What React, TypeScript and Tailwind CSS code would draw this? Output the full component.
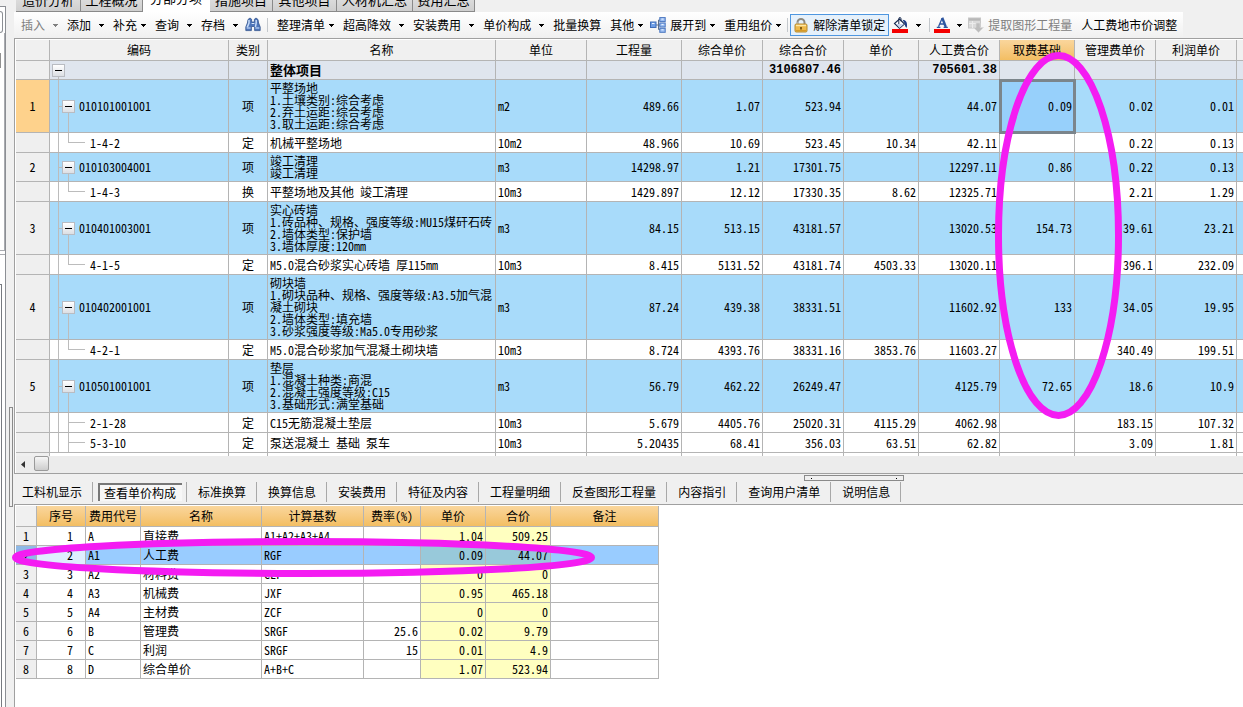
import type { ReactNode } from 'react';

type Row = {
  no?: string;
  code: string;
  last?: boolean;
  kind: string;
  name: string[];
  unit: string;
  values: string[];
  height: string;
};

const H20 = 'h-[19px]';
const H29 = 'h-[28px]';
const H53 = 'h-[52px]';
const H65 = 'h-[64px]';

const rows: Row[] = [
  { no: '1', code: '010101001001', kind: '项', name: ['平整场地', '1.土壤类别:综合考虑', '2.弃土运距:综合考虑', '3.取土运距:综合考虑'], unit: 'm2', values: ['489.66', '1.07', '523.94', '', '44.07', '0.09', '0.02', '0.01'], height: H53 },
  { code: '1-4-2', last: true, kind: '定', name: ['机械平整场地'], unit: '10m2', values: ['48.966', '10.69', '523.45', '10.34', '42.11', '', '0.22', '0.13'], height: H20 },
  { no: '2', code: '010103004001', kind: '项', name: ['竣工清理', '竣工清理'], unit: 'm3', values: ['14298.97', '1.21', '17301.75', '', '12297.11', '0.86', '0.22', '0.13'], height: H29 },
  { code: '1-4-3', last: true, kind: '换', name: ['平整场地及其他 竣工清理'], unit: '10m3', values: ['1429.897', '12.12', '17330.35', '8.62', '12325.71', '', '2.21', '1.29'], height: H20 },
  { no: '3', code: '010401003001', kind: '项', name: ['实心砖墙', '1.砖品种、规格、强度等级:MU15煤矸石砖', '2.墙体类型:保护墙', '3.墙体厚度:120mm'], unit: 'm3', values: ['84.15', '513.15', '43181.57', '', '13020.53', '154.73', '39.61', '23.21'], height: H53 },
  { code: '4-1-5', last: true, kind: '定', name: ['M5.0混合砂浆实心砖墙 厚115mm'], unit: '10m3', values: ['8.415', '5131.52', '43181.74', '4503.33', '13020.11', '', '396.1', '232.09'], height: H20 },
  { no: '4', code: '010402001001', kind: '项', name: ['砌块墙', '1.砌块品种、规格、强度等级:A3.5加气混', '凝土砌块', '2.墙体类型:填充墙', '3.砂浆强度等级:Ma5.0专用砂浆'], unit: 'm3', values: ['87.24', '439.38', '38331.51', '', '11602.92', '133', '34.05', '19.95'], height: H65 },
  { code: '4-2-1', last: true, kind: '定', name: ['M5.0混合砂浆加气混凝土砌块墙'], unit: '10m3', values: ['8.724', '4393.76', '38331.16', '3853.76', '11603.27', '', '340.49', '199.51'], height: H20 },
  { no: '5', code: '010501001001', kind: '项', name: ['垫层', '1.混凝土种类:商混', '2.混凝土强度等级:C15', '3.基础形式:满堂基础'], unit: 'm3', values: ['56.79', '462.22', '26249.47', '', '4125.79', '72.65', '18.6', '10.9'], height: H53 },
  { code: '2-1-28', kind: '定', name: ['C15无筋混凝土垫层'], unit: '10m3', values: ['5.679', '4405.76', '25020.31', '4115.29', '4062.98', '', '183.15', '107.32'], height: H20 },
  { code: '5-3-10', kind: '定', name: ['泵送混凝土 基础 泵车'], unit: '10m3', values: ['5.20435', '68.41', '356.03', '63.51', '62.82', '', '3.09', '1.81'], height: H20 },
];

const headers = ['', '编码', '类别', '名称', '单位', '工程量', '综合单价', '综合合价', '单价', '人工费合价', '取费基础', '管理费单价', '利润单价', ''];
const totals = ['', '', '3106807.46', '', '705601.38', '', '', ''];

const feeHeaders = ['', '序号', '费用代号', '名称', '计算基数', '费率(%)', '单价', '合价', '备注'];
const fees = [
  ['A', '直接费', 'A1+A2+A3+A4', '', '1.04', '509.25'],
  ['A1', '人工费', 'RGF', '', '0.09', '44.07'],
  ['A2', '材料费', 'CLF', '', '0', '0'],
  ['A3', '机械费', 'JXF', '', '0.95', '465.18'],
  ['A4', '主材费', 'ZCF', '', '0', '0'],
  ['B', '管理费', 'SRGF', '25.6', '0.02', '9.79'],
  ['C', '利润', 'SRGF', '15', '0.01', '4.9'],
  ['D', '综合单价', 'A+B+C', '', '1.07', '523.94'],
];

const line = 'border-[#b4b4b4]';

function Arrow() {
  return (
    <svg className="h-[3px] w-[5px] fill-current" viewBox="0 0 5 3" shapeRendering="crispEdges" aria-hidden="true">
      <path d="M0 0h5v1H4v1H3v1H2V2H1V1H0z" />
    </svg>
  );
}

function Tool({ label, icon, menu = 'none', muted = false }: { label: string; icon?: ReactNode; menu?: 'none' | 'near' | 'far'; muted?: boolean }) {
  return (
    <button type="button" className={`flex shrink-0 items-center whitespace-nowrap ${menu === 'far' ? 'gap-2' : 'gap-1'} ${muted ? 'text-[#808080]' : 'text-black'}`}>
      {icon}
      {label}
      {menu !== 'none' && <Arrow />}
    </button>
  );
}

function Divider() {
  return <span className="h-[14px] w-px shrink-0 bg-[#c4c8cc]" />;
}

function Binoculars() {
  return (
    <svg className="h-4 w-4" viewBox="0 0 16 16" aria-hidden="true">
      <path d="M3 2.5 5 1l1.6 1.2V5h2.8V2.2L11 1l2 1.5.6 3.5 1.6 4v3.6h-5.6V9.5H6.4v4.1H.8V10l1.6-4z" fill="#4f76ba" stroke="#34558f" strokeWidth=".8" />
      <path d="M4 3v3L2.2 10.4M11.2 3v3l-.8 4" stroke="#c6dbf8" strokeWidth="1.5" fill="none" />
      <path d="M1.6 11h4M10.4 11h4" stroke="#a9c4ee" strokeWidth="1.5" />
      <path d="M6.6 6.5h2.8" stroke="#dbe8fa" />
    </svg>
  );
}

function Expand() {
  return (
    <svg className="h-4 w-4" viewBox="0 0 16 16" aria-hidden="true">
      <path d="M6 8h2.500M8.500 3v9.500M8.500 3H10M8.500 12.500H10M8.500 8H10" stroke="#5f6f88" fill="none" />
      <rect x=".5" y="5" width="5.500" height="5.500" fill="#6f9ee6" stroke="#3f6cb8" />
      <rect x="9.800" y=".6" width="5.400" height="4" fill="#9dbff2" stroke="#4a76bf" />
      <rect x="9.800" y="6" width="5.400" height="4" fill="#9dbff2" stroke="#4a76bf" />
      <rect x="9.800" y="11.300" width="5.400" height="4" fill="#9dbff2" stroke="#4a76bf" />
      <path d="M2 6.500h2.500M11.500 2.100h2M11.500 7.500h2M11.500 12.800h2" stroke="#e9f2ff" />
    </svg>
  );
}

function Lock() {
  return (
    <svg className="h-4 w-4" viewBox="0 0 16 16" aria-hidden="true">
      <path d="M4.500 8V5.500a3.500 3.500 0 0 1 7 0V8" fill="none" stroke="#8e8a80" strokeWidth="2" />
      <path d="M4.300 7.500V5.500" stroke="#e6e6e6" strokeWidth=".8" />
      <rect x="2" y="7" width="12" height="8" rx="1.200" fill="#eeb94a" stroke="#b58a30" />
      <path d="M3 8.500h10" stroke="#fde7a6" strokeWidth="1.400" />
      <path d="M8 10v2.600" stroke="#6b4a08" strokeWidth="1.600" />
      <path d="M3 13.600h10" stroke="#d49725" />
    </svg>
  );
}

function Bucket() {
  return (
    <svg className="h-4 w-4" viewBox="0 0 16 16" aria-hidden="true">
      <path d="M2.500 6.500 7.500 2l5 5-5 4.200z" fill="#fff" stroke="#16294f" strokeWidth="1.100" />
      <path d="M4.500 7h7.500l-4.500 3.900z" fill="#c8d6ef" />
      <path d="M6.800 7V1.800C6.800 0 9 0 9 1.800v2.500" fill="none" stroke="#16294f" />
      <path d="M10.500 2.800c3.500.2 5.200 2.500 4.300 8-1.300-.4-1.900-1.700-2-4z" fill="#1d3c86" />
      <rect y="12" width="16" height="4" fill="#f40000" />
    </svg>
  );
}

function FontColor() {
  return (
    <svg className="h-4 w-4" viewBox="0 0 16 16" aria-hidden="true">
      <path d="M8 1.500 4.500 9.800M5.700 7h5" stroke="#2e56a0" strokeWidth="1.300" fill="none" />
      <path d="M8.200 .8 11.800 10" stroke="#2e56a0" strokeWidth="2.400" />
      <path d="M2.800 10.300h3.600M9.600 10.300h4.200" stroke="#2e56a0" strokeWidth="1.200" />
      <rect y="12" width="16" height="4" fill="#f40000" />
    </svg>
  );
}

function Extract() {
  return (
    <svg className="h-4 w-4" viewBox="0 0 16 16" aria-hidden="true">
      <rect x=".5" y="1" width="12" height="10" fill="#dadada" stroke="#c6c6c6" />
      <path d="M1 2.500h11" stroke="#b8b8b8" strokeWidth="2.500" />
      <path d="M1 6.500h11M4.500 4v7" stroke="#ececec" />
      <path d="M8 6h4v4.500h3.500l-5 5-5-5H8z" fill="#bdbdbd" stroke="#dcdcdc" strokeWidth=".6" />
    </svg>
  );
}

function Toggle({ label }: { label: string }) {
  return (
    <button type="button" aria-label={label} className="flex h-[13px] w-[13px] shrink-0 items-center justify-center border border-[#b9bcc2] bg-linear-to-b from-white to-[#dcdfe4]">
      <span className="h-px w-[7px] bg-black" />
    </button>
  );
}

function CodeCell({ row }: { row: Row }) {
  if (row.no) {
    return (
      <div className={`flex items-center ${row.height}`}>
        <svg className="h-full w-3" shapeRendering="crispEdges" aria-hidden="true">
          <line x1="8.500" x2="8.500" y1="0" y2="100%" stroke="#bcbcbc" />
          <line x1="9" x2="12" y1="50%" y2="50%" stroke="#bcbcbc" />
        </svg>
        <div className="flex h-full w-[13px] flex-col items-center">
          <span className="flex-1" />
          <Toggle label={`折叠 ${row.code}`} />
          <span className="w-px flex-1 bg-[#bcbcbc]" />
        </div>
        <span className="pl-1">{row.code}</span>
      </div>
    );
  }
  return (
    <div className={`flex items-center ${row.height}`}>
      <svg className="h-full w-9" shapeRendering="crispEdges" aria-hidden="true">
        <line x1="8.500" x2="8.500" y1="0" y2="100%" stroke="#bcbcbc" />
        <line x1="18.500" x2="18.500" y1="0" y2={row.last ? '50%' : '100%'} stroke="#bcbcbc" />
        <line x1="18" x2="35" y1="50%" y2="50%" stroke="#bcbcbc" />
      </svg>
      <span className="pl-1">{row.code}</span>
    </div>
  );
}

const topTabs = [
  { label: '造价分析', width: 'w-[65px]' },
  { label: '工程概况', width: 'w-[62px]' },
  { label: '分部分项', width: 'w-[67px]' },
  { label: '措施项目', width: 'w-[63px]' },
  { label: '其他项目', width: 'w-[64px]' },
  { label: '人材机汇总', width: 'w-[76px]' },
  { label: '费用汇总', width: 'w-[62px]' },
];

const detailTabs = ['标准换算', '换算信息', '安装费用', '特征及内容', '工程量明细', '反查图形工程量', '内容指引', '查询用户清单', '说明信息'];

export default function App() {
  const cell = `border-r border-b ${line} p-0`;
  const lastCell = `border-b ${line} p-0`;
  const amber = 'bg-linear-to-b from-[#fad69c] to-[#f3be62]';

  return (
    <div className="flex h-screen overflow-hidden bg-[#f0f0f0] font-['Noto_Sans_Mono_CJK_SC','Noto_Sans_CJK_SC',monospace] text-[12px] leading-[12px] text-black">
      <aside className="flex w-[14px] shrink-0">
        <div className="mt-[6px] flex w-[6px] flex-col border-t border-r border-[#8c8f94] bg-white">
          <div className="mt-1 h-[22px] w-[3px] rounded-r-sm border-y border-r border-[#8c8f94]" />
          <div className="h-[218px] w-[5px] border-r border-b border-[#a9abb0] pt-[20px]">
            <div className="h-[15px] w-px bg-[#909090]" />
          </div>
          <div className="h-[4px] border-b border-[#a9abb0]" />
          <div className="h-[29px]" />
          <div className="w-[2px] flex-1 border-t border-r border-[#777a80]" />
        </div>
        <div className="mt-[407px] ml-[3px] h-[100px] w-[4px] border border-[#8a8a8a] bg-[#f0f0f0]" />
      </aside>

      <main className="flex min-w-0 flex-1 flex-col">
        <nav className="flex h-3 items-end overflow-hidden pl-[2px] text-[13px]" aria-label="工程页签">
          {topTabs.map((tab) => (
            <button
              key={tab.label}
              type="button"
              className={`flex h-6 shrink-0 items-start justify-center border-r whitespace-nowrap ${tab.width} ${
                tab.label === '分部分项' ? 'border-white bg-white pt-1' : 'border-b border-[#8a8a8a] bg-linear-to-b from-[#e8e8e8] to-[#cfcfcf] pt-[6px]'
              }`}
            >
              {tab.label}
            </button>
          ))}
        </nav>

        <div className="flex">
          <div className="flex h-[26px] shrink-0 items-center gap-[9px] bg-linear-to-b from-white to-[#f0f0f0] pr-[6px] pl-[7px]" role="toolbar">
            <Tool label="插入" menu="far" muted />
            <Tool label="添加" menu="far" />
            <Tool label="补充" menu="near" />
            <Tool label="查询" menu="far" />
            <Tool label="存档" menu="far" />
            <div className="flex items-center gap-[6px]">
              <button type="button" aria-label="查找" className="-ml-[2px]"><Binoculars /></button>
              <Divider />
            </div>
            <Tool label="整理清单" menu="near" />
            <Tool label="超高降效" menu="far" />
            <Tool label="安装费用" menu="far" />
            <Tool label="单价构成" menu="far" />
            <Tool label="批量换算" />
            <div className="flex gap-[7px]">
              <Tool label="其他" menu="near" />
              <Tool label="展开到" menu="near" icon={<Expand />} />
            </div>
            <Tool label="重用组价" menu="near" />
            <div className="-ml-[3px] flex items-center gap-[2px]">
              <Divider />
              <button type="button" className="flex h-[22px] items-center gap-1 border border-[#4f97e0] bg-[#e6f1fb] pr-[3px] pl-[2px] whitespace-nowrap">
                <Lock />
                解除清单锁定
              </button>
              <button type="button" aria-label="填充颜色" className="flex items-center gap-2 pl-px">
                <Bucket />
                <Arrow />
              </button>
            </div>
            <div className="-ml-px flex items-center gap-1">
              <Divider />
              <button type="button" aria-label="字体颜色" className="flex items-center gap-[7px]">
                <FontColor />
                <Arrow />
              </button>
            </div>
            <div className="-ml-[3px] flex">
              <Tool label="提取图形工程量" muted icon={<Extract />} />
            </div>
            <Tool label="人工费地市价调整" />
          </div>
        </div>

        <section className="overflow-hidden border-t border-b border-l border-[#a0a0a0] bg-white pt-px pl-px" aria-label="清单">
          <table className="w-full table-fixed border-separate border-spacing-0">
            <colgroup>
              <col className="w-[34px]" />
              <col className="w-[179px]" />
              <col className="w-[39px]" />
              <col className="w-[228px]" />
              <col className="w-[91px]" />
              <col className="w-[95px]" />
              <col className="w-[81px]" />
              <col className="w-[81px]" />
              <col className="w-[75px]" />
              <col className="w-[81px]" />
              <col className="w-[75px]" />
              <col className="w-[81px]" />
              <col className="w-[81px]" />
              <col />
            </colgroup>
            <thead>
              <tr className="h-[21px]">
                {headers.map((h, i) => (
                  <th key={i} className={`${i === headers.length - 1 ? lastCell : cell} font-normal whitespace-nowrap ${h === '取费基础' ? amber : 'bg-[#f0f0f0]'}`}>{h}</th>
                ))}
              </tr>
            </thead>
            <tbody>
              <tr className="h-[19px] bg-[#dfe5ee] font-bold">
                <td className={`${cell} bg-[#efefef]`} />
                <td className={cell}>
                  <div className="flex h-[18px] flex-col items-start pl-[2px]">
                    <span className="h-[3px]" />
                    <Toggle label="折叠 整体项目" />
                    <span className="ml-[6px] w-px flex-1 bg-[#bcbcbc]" />
                  </div>
                </td>
                <td className={cell} />
                <td className={`${cell} pl-[2px] text-[13px]`}>整体项目</td>
                <td className={cell} />
                {totals.map((v, i) => (
                  <td key={i} className={`${cell} pr-[2px] text-right font-['Liberation_Mono',monospace]`}>{v}</td>
                ))}
                <td className={lastCell} />
              </tr>
              {rows.map((row) => (
                <tr key={row.code} className={row.no ? 'bg-[#a8dbfa]' : 'bg-white'}>
                  <td className={`${cell} text-center ${row.no === '1' ? 'bg-[#fed28c]' : 'bg-[#efefef]'}`}>{row.no}</td>
                  <td className={cell}><CodeCell row={row} /></td>
                  <td className={`${cell} text-center`}>{row.kind}</td>
                  <td className={`${cell} pl-[2px]`}>
                    {row.name.map((text, i) => (
                      <div key={i} className="whitespace-nowrap">{text}</div>
                    ))}
                  </td>
                  <td className={`${cell} pl-[2px]`}>{row.unit}</td>
                  {row.values.map((v, i) => (
                    <td
                      key={i}
                      className={`${cell} pr-[2px] text-right ${row.no === '1' && i === 5 ? 'bg-[#97d0fb] outline-[3px] -outline-offset-2 outline-[#7b858c]' : ''}`}
                    >
                      {v}
                    </td>
                  ))}
                  <td className={lastCell} />
                </tr>
              ))}
              <tr className="h-[3px]">
                {headers.map((_, i) => (
                  <td key={i} className={`${i === headers.length - 1 ? '' : 'border-r'} ${line} p-0 ${i === 0 ? 'bg-[#efefef]' : ''}`} />
                ))}
              </tr>
            </tbody>
          </table>
          <div className="flex h-[17px] items-start gap-[8px] bg-[#ececec] pl-[5px]">
            <button type="button" aria-label="向左滚动" className="flex h-4 w-[5px] items-center">
              <svg className="h-[7px] w-1" viewBox="0 0 4 7" aria-hidden="true"><path d="M4 0v7L0 3.500z" fill="#333" /></svg>
            </button>
            <div className="h-[15px] w-[15px] rounded-[2px] border border-[#9a9a9a] bg-linear-to-b from-[#f6f6f6] to-[#cdcdcd]" />
          </div>
        </section>

        <nav className="relative flex h-[30px] shrink-0 items-center pt-[6px] pl-[2px] whitespace-nowrap" aria-label="明细页签">
          <div className="absolute top-[1px] left-[790px] flex h-[6px] w-[100px] items-center justify-between border border-[#8a8a8a] bg-[#f0f0f0] px-[6px]">
            <span className="h-px w-px bg-black" />
            <span className="h-px w-px bg-black" />
          </div>
          <button type="button" className="h-[20px] border-r border-[#a8a8a8] pr-[10px] pl-[6px]">工料机显示</button>
          <div className="flex h-[20px] items-center border-r border-[#a8a8a8] pr-[4px] pl-[5px]">
            <button type="button" className="h-[18px] border-t-2 border-l-2 border-[#777] bg-[#f7f7f7] pr-[6px] pl-[4px]">查看单价构成</button>
          </div>
          {detailTabs.map((t) => (
            <button key={t} type="button" className="h-[20px] border-r border-[#a8a8a8] pr-[10px] pl-[11px]">{t}</button>
          ))}
        </nav>

        <section className="min-h-0 flex-1 overflow-hidden border-t border-l border-[#a0a0a0] bg-white pt-px pl-px" aria-label="单价构成">
          <table className="table-fixed border-separate border-spacing-0">
            <colgroup>
              <col className="w-[21px]" />
              <col className="w-[49px]" />
              <col className="w-[55px]" />
              <col className="w-[121px]" />
              <col className="w-[102px]" />
              <col className="w-[57px]" />
              <col className="w-[65px]" />
              <col className="w-[65px]" />
              <col className="w-[108px]" />
            </colgroup>
            <thead>
              <tr className="h-[21px]">
                {feeHeaders.map((h, i) => (
                  <th key={i} className={`${cell} font-normal whitespace-nowrap ${i === 0 ? 'bg-[#f0f0f0]' : amber}`}>{h}</th>
                ))}
              </tr>
            </thead>
            <tbody>
              {fees.map(([code, name, base, rate, price, sum], i) => {
                const selected = code === 'A1';
                const money = selected ? 'bg-[#98c9da]' : 'bg-[#ffffc0]';
                return (
                  <tr key={code} className={`h-[19px] ${selected ? 'bg-[#99ccff]' : 'bg-white'}`}>
                    <td className={`${cell} text-center ${selected ? 'bg-[#8fb9e6]' : 'bg-[#efefef]'}`}>{i + 1}</td>
                    <td className={`${cell} pr-3 text-right ${selected ? 'bg-[#deeefe]' : ''}`}>{i + 1}</td>
                    <td className={`${cell} pl-[2px]`}>{code}</td>
                    <td className={`${cell} pl-[2px]`}>{name}</td>
                    <td className={`${cell} pl-[2px]`}>{base}</td>
                    <td className={`${cell} pr-[2px] text-right`}>{rate}</td>
                    <td className={`${cell} pr-[2px] text-right ${money}`}>{price}</td>
                    <td className={`${cell} pr-[2px] text-right ${money}`}>{sum}</td>
                    <td className={cell} />
                  </tr>
                );
              })}
            </tbody>
          </table>
        </section>
      </main>

      <svg className="pointer-events-none absolute top-0 left-0 h-[707px] w-[1243px]" viewBox="0 0 1243 707" fill="none" stroke="#f41cf2" strokeWidth="7" aria-hidden="true">
        <ellipse cx="1058.500" cy="235.500" rx="60" ry="180" />
        <ellipse cx="303.500" cy="557.500" rx="288" ry="16" />
      </svg>
    </div>
  );
}
